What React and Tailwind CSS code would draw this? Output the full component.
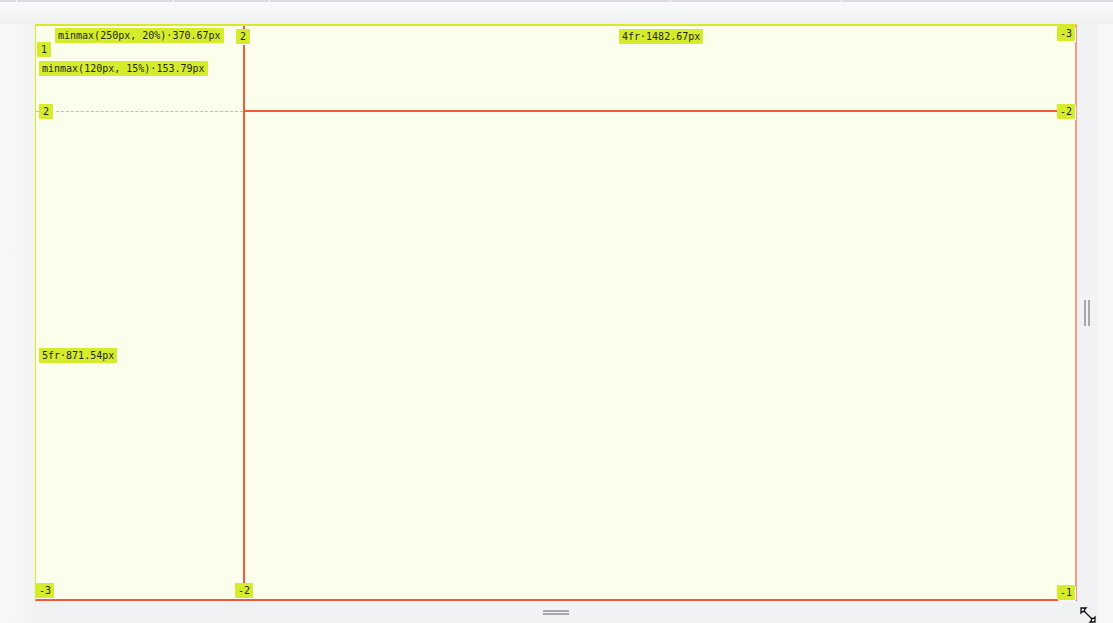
const mono = { fontFamily: '"DejaVu Sans Mono", "Liberation Mono", monospace' }

const labels = [
  { text: 'minmax(250px, 20%)·370.67px', cls: 'left-[19px] top-[2px]' },
  { text: '1', cls: 'left-[1px] top-[16px]' },
  { text: '2', cls: 'left-[200px] top-[3px]' },
  { text: '4fr·1482.67px', cls: 'left-[583px] top-[3px]' },
  { text: '-3', cls: 'left-[1021px] top-[0px]' },
  { text: 'minmax(120px, 15%)·153.79px', cls: 'left-[3px] top-[35px]' },
  { text: '2', cls: 'left-[3px] top-[78px]' },
  { text: '-2', cls: 'left-[1021px] top-[78px]' },
  { text: '5fr·871.54px', cls: 'left-[3px] top-[322px]' },
  { text: '-3', cls: 'left-[0px] top-[557px]' },
  { text: '-2', cls: 'left-[199px] top-[557px]' },
  { text: '-1', cls: 'left-[1021px] top-[559px]' },
]

function Label({ text, cls }) {
  return (
    <div
      className={`absolute ${cls} h-[15px] min-w-[14px] px-[3px] bg-[#d4ec2b] text-[#262626] text-[10px] leading-[15px] text-center whitespace-pre rounded-[1px] shadow-[1px_1px_0_#ffffff]`}
      style={mono}
    >
      {text}
    </div>
  )
}

function ResizeIcon() {
  return (
    <svg width="18" height="18" viewBox="0 0 18 18" fill="none" stroke="#111" strokeWidth="1.3">
      <path d="M4 4 L14 14" />
      <path d="M2 7 V2 H7 L5.5 3.5 V5.5 H3.5 Z" fill="#fff" />
      <path d="M16 11 V16 H11 L12.5 14.5 V12.5 H14.5 Z" fill="#fff" />
    </svg>
  )
}

export default function App() {
  return (
    <div className="w-[1113px] h-[623px] flex flex-col bg-[#f7f8f8] overflow-hidden">
      <div className="h-[2px] shrink-0 bg-[#dcdde2] flex">
        <div className="w-[16px]" />
        <div className="w-[1px] bg-white" />
        <div className="w-[156px]" />
        <div className="w-[1px] bg-white" />
        <div className="w-[95px]" />
        <div className="w-[1px] bg-white" />
        <div className="w-[400px]" />
        <div className="w-[1px] bg-white" />
        <div className="w-[170px]" />
        <div className="w-[1px] bg-white" />
      </div>
      <div className="h-[22px] shrink-0 bg-gradient-to-b from-[#fafbfb] to-[#eef0f0]" />

      <div className="flex flex-1">
        <div className="w-[34px] bg-gradient-to-r from-[#f8f9f9] to-[#f2f3f3]" />

        <div className="w-[1064px] bg-[#f1f2f4] flex flex-col">
          <div className="flex">
            <div className="relative ml-[1px] w-[1042px] h-[577px] grid grid-cols-[207px_1fr] grid-rows-[86px_1fr] bg-[#fafeeb] border-t-2 border-t-[#d9e92a] border-l border-l-[#d9e92a] border-r-2 border-r-[#f59a86] border-b-2 border-b-[#f4583a]">
              <div className="border-b border-dashed border-b-[#c4dc10]" />
              <div className="border-l-2 border-l-[#f4583a] border-b-2 border-b-[#f4583a]" />
              <div />
              <div className="border-l-2 border-l-[#f4583a]" />
              {labels.map((l, i) => (
                <Label key={i} {...l} />
              ))}
            </div>
            <div className="w-[21px] flex items-center pl-[7px]">
              <div className="flex gap-[2px]">
                <div className="w-[2px] h-[26px] bg-[#a9a9a9]" />
                <div className="w-[2px] h-[26px] bg-[#a9a9a9]" />
              </div>
            </div>
          </div>

          <div className="flex flex-1 items-center">
            <div className="ml-[1px] w-[1042px] flex justify-center">
              <div className="flex flex-col gap-[1px]">
                <div className="w-[26px] h-[2px] bg-[#a9a9a9]" />
                <div className="w-[26px] h-[2px] bg-[#a9a9a9]" />
              </div>
            </div>
            <div className="ml-[2px] mt-[5px]">
              <ResizeIcon />
            </div>
          </div>
        </div>

        <div className="flex-1 bg-[#f7f8f8]" />
      </div>
    </div>
  )
}
